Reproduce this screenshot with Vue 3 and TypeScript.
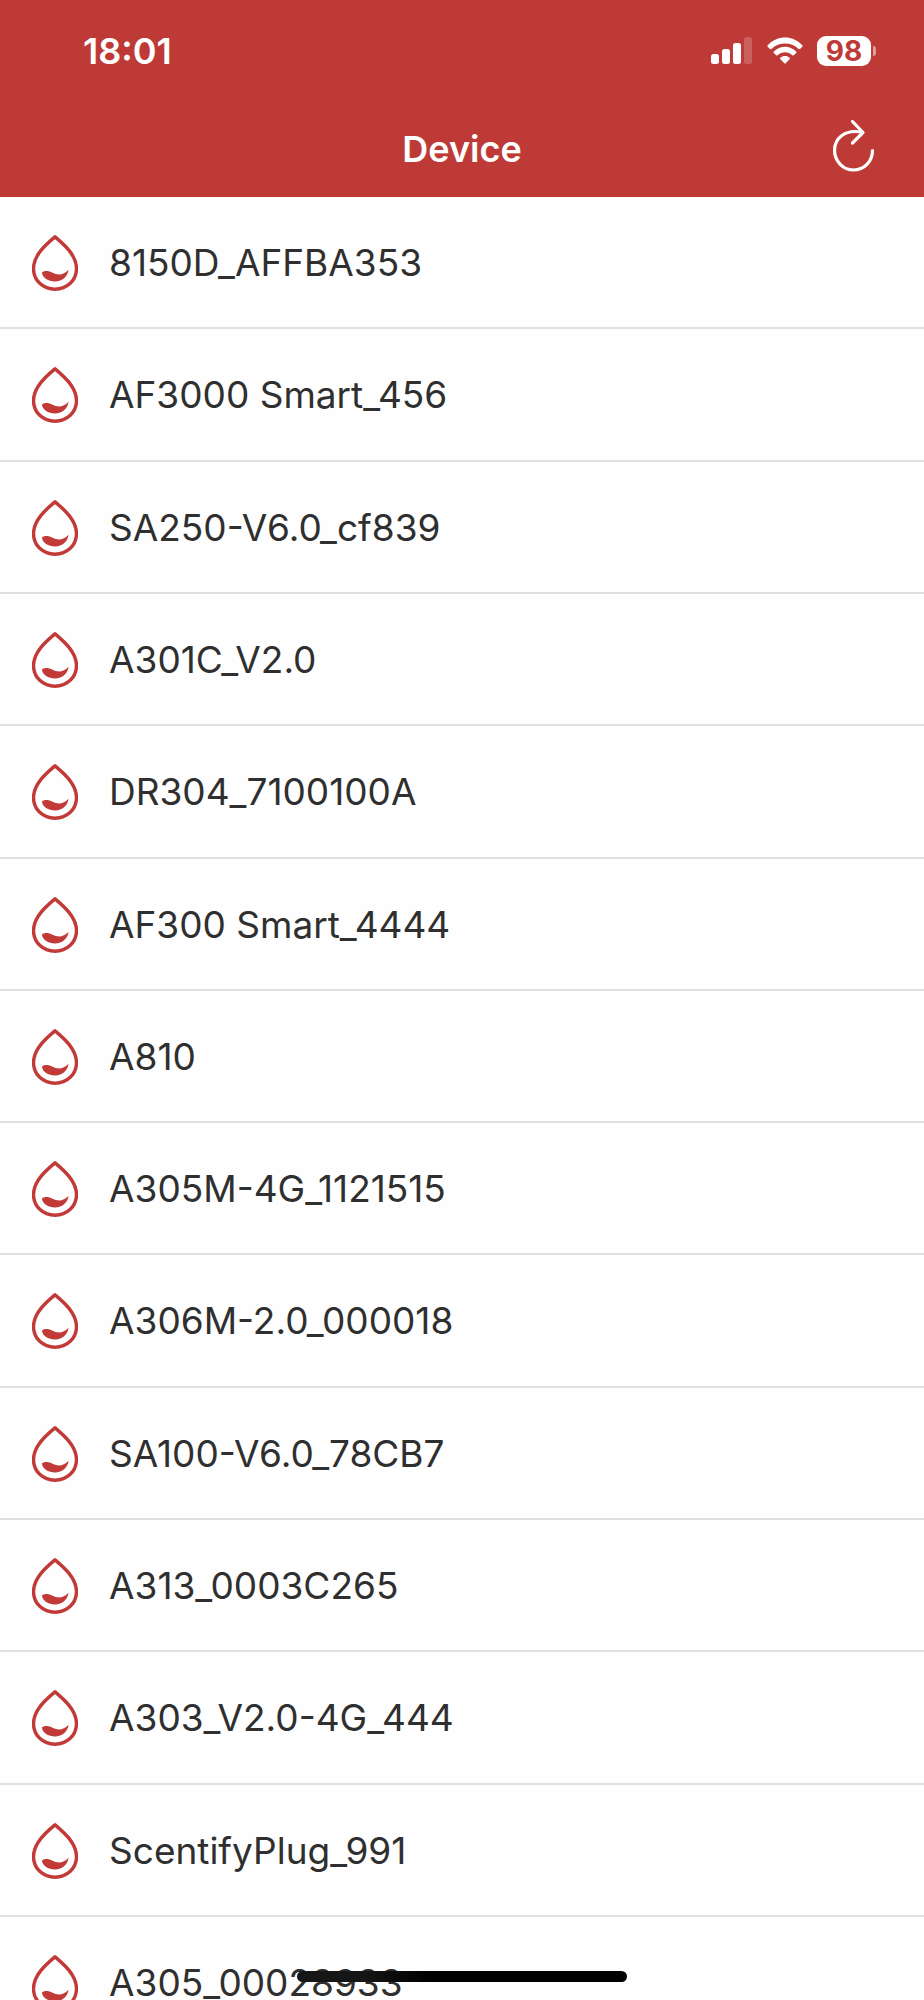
<script setup lang="ts">
interface Device {
  name: string
}

const battery: number = 98

const devices: Device[] = [
  { name: '8150D_AFFBA353' },
  { name: 'AF3000 Smart_456' },
  { name: 'SA250-V6.0_cf839' },
  { name: 'A301C_V2.0' },
  { name: 'DR304_7100100A' },
  { name: 'AF300 Smart_4444' },
  { name: 'A810' },
  { name: 'A305M-4G_1121515' },
  { name: 'A306M-2.0_000018' },
  { name: 'SA100-V6.0_78CB7' },
  { name: 'A313_0003C265' },
  { name: 'A303_V2.0-4G_444' },
  { name: 'ScentifyPlug_991' },
  { name: 'A305_00028933' },
]
</script>

<template>
  <div class="screen">
    <header class="top">
      <div class="status">
        <time class="clock">18:01</time>
        <div class="indicators">
          <svg class="signal" viewBox="0 0 42 28" aria-hidden="true">
            <rect x="0" y="17" width="8" height="10" rx="2.5" />
            <rect x="11" y="12" width="8" height="15" rx="2.5" />
            <rect x="22" y="6" width="8" height="21" rx="2.5" />
            <rect x="33" y="0" width="8" height="27" rx="2.5" opacity=".2" />
          </svg>
          <svg class="wifi" viewBox="0 0 36 28" aria-hidden="true">
            <path d="M.7 8.3C10.400-2 25.600-2 35.300 8.300Q36 9 35.300 9.700L33 12Q32.300 12.600 31.600 12C24 4.800 12 4.800 4.400 12Q3.700 12.600 3 12L.7 9.700Q0 9 .7 8.300Z" />
            <path d="M6.800 14.500C13 8 23 8 29.200 14.500Q29.900 15.200 29.200 15.900L26.800 18.200Q26.100 18.800 25.400 18.200C21.200 14.300 14.800 14.300 10.600 18.200Q9.900 18.800 9.200 18.200L6.800 15.900Q6.100 15.200 6.800 14.500Z" />
            <path d="M13.200 20.900C15.900 18.400 20.100 18.400 22.800 20.900Q23.400 21.500 22.800 22.100L18.700 26.300Q18 27 17.300 26.300L13.200 22.100Q12.600 21.500 13.200 20.900Z" />
          </svg>
          <div class="battery">
            <span class="level">{{ battery }}</span>
            <span class="cap"></span>
          </div>
        </div>
      </div>
      <div class="bar">
        <h1 class="title">Device</h1>
        <button class="refresh" type="button" aria-label="Refresh">
          <svg viewBox="0 0 44 54" aria-hidden="true">
            <path d="M30.500 13.300C12 9.500 2.500 20 2.500 31.500A19 20 0 0 0 21.500 51C32 51 40.500 42.500 40.500 31.500" />
            <path d="M20.500 2.500L31 13.500L20.500 24" />
          </svg>
        </button>
      </div>
    </header>

    <ul class="list">
      <li v-for="device in devices" :key="device.name" class="row">
        <a class="device" href="#">
          <svg class="drop" viewBox="0 0 46 56" aria-hidden="true">
            <path class="outline" d="M23 1.800C17 7 1.500 19 1.500 33.500C1.500 45.500 11 54.200 23 54.200S44.500 45.500 44.500 33.500C44.500 19 29 7 23 1.800Z" />
            <path class="liquid" d="M10 37.500C12 35.500 16.500 35.500 20 37.500C26 40.500 31 40.500 36.500 34.800C36 41 30.500 46.500 23 46.500C16.500 46.500 10 42.500 10 37.500Z" />
          </svg>
          <span class="name">{{ device.name }}</span>
        </a>
      </li>
    </ul>
    <div class="home"></div>
  </div>
</template>

<style>
body {
  margin: 0;
  background: #fefefe;
}
</style>

<style scoped>
.screen {
  position: relative;
  display: flex;
  flex-direction: column;
  min-height: 100vh;
  background: #fefefe;
  color: #2f2f2f;
  font-family: Inter, "Liberation Sans", sans-serif;
}

.top {
  background: #be3a37;
  color: #fff;
}

.status {
  display: flex;
  align-items: center;
  justify-content: space-between;
  height: 101px;
  padding: 0 48px 0 83px;
}

.clock {
  font-size: 36px;
  font-weight: 600;
  line-height: 40px;
}

.indicators {
  display: flex;
  align-items: center;
  gap: 14px;
}

.signal {
  width: 42px;
  height: 28px;
  fill: #fff;
}

.wifi {
  width: 36px;
  height: 28px;
  fill: #fff;
}

.battery {
  display: flex;
  align-items: center;
  gap: 2px;
}

.level {
  width: 54px;
  border-radius: 9px;
  background: #fff;
  color: #be3a37;
  font-size: 28px;
  font-weight: 700;
  line-height: 30px;
  text-align: center;
}

.cap {
  width: 3px;
  height: 10px;
  border-radius: 0 4px 4px 0;
  background: #df9c9b;
}

.bar {
  display: grid;
  grid-template-columns: 1fr auto 1fr;
  align-items: center;
  height: 96px;
  padding: 0 46px;
}

.title {
  grid-column: 2;
  margin: 0;
  font-size: 36px;
  font-weight: 600;
  line-height: 44px;
}

.refresh {
  justify-self: end;
  padding: 0 2px 6px 0;
  border: 0;
  background: none;
  cursor: pointer;
}

.refresh svg {
  display: block;
  width: 44px;
  height: 54px;
  fill: none;
  stroke: #fff;
  stroke-width: 3.2;
  stroke-linecap: round;
  stroke-linejoin: round;
}

.list {
  display: grid;
  flex: 1;
  grid-template-rows: repeat(13, 1fr) 83px;
  margin: 0;
  padding: 0;
  list-style: none;
}

.row {
  overflow: hidden;
  border-bottom: 2px solid #dfdfdf;
}

.row:last-child {
  border-bottom: 0;
}

.device {
  box-sizing: border-box;
  display: flex;
  align-items: center;
  gap: 31px;
  height: 130px;
  padding: 2px 32px 0;
  color: inherit;
  text-decoration: none;
}

.drop {
  flex: none;
  width: 46px;
  height: 56px;
}

.outline {
  fill: none;
  stroke: #c23a38;
  stroke-width: 3.4;
  stroke-linejoin: round;
}

.liquid {
  fill: #c23a38;
}

.name {
  font-size: 37px;
  line-height: 48px;
  white-space: nowrap;
}

.home {
  position: absolute;
  bottom: 18px;
  left: 50%;
  width: 330px;
  height: 11px;
  border-radius: 6px;
  background: linear-gradient(90deg, #161616 20%, #000 40%);
  transform: translateX(-50%);
}
</style>
